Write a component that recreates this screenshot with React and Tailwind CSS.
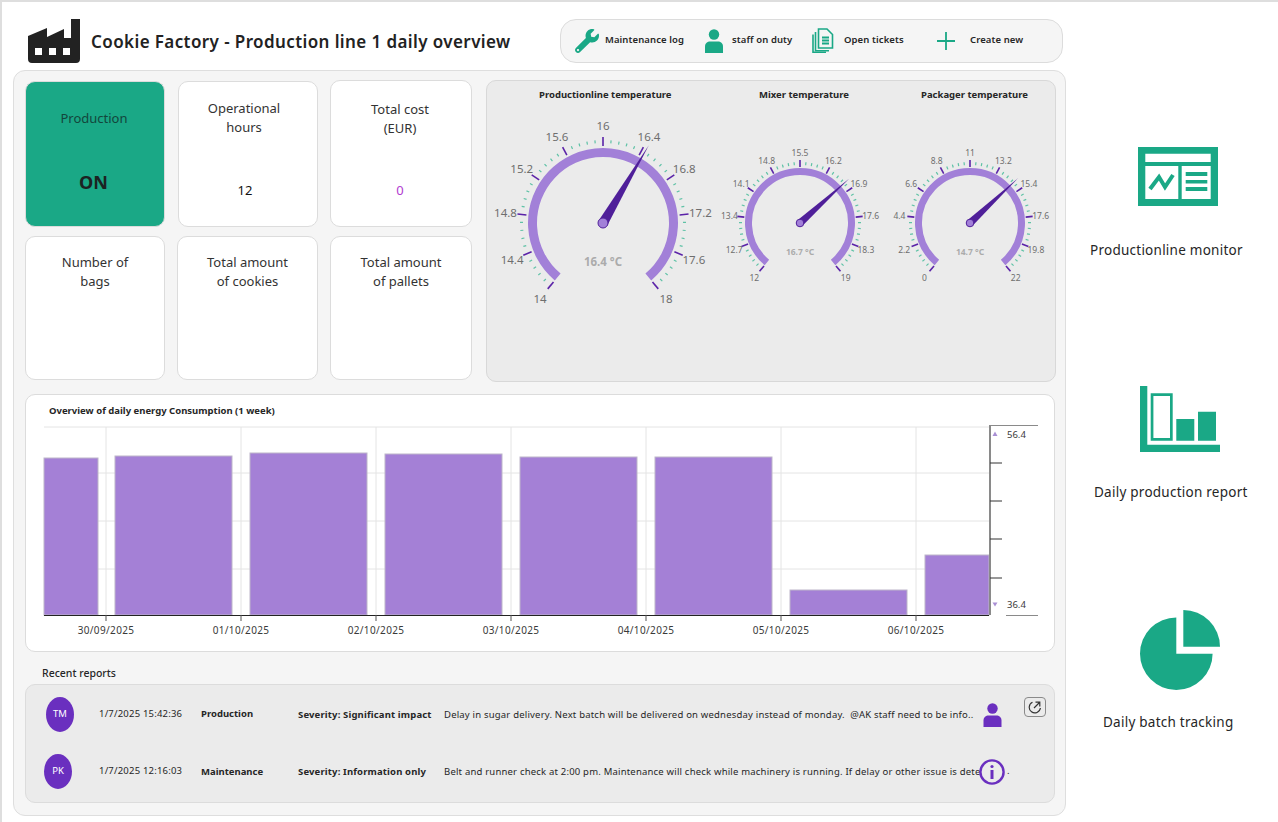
import React from "react";
import { FaWrench } from "react-icons/fa";

const teal = "#1aa886";

function polar(cx, cy, r, deg) {
  const a = (deg * Math.PI) / 180;
  return [cx + r * Math.sin(a), cy - r * Math.cos(a)];
}

function arcPath(cx, cy, r, from, to) {
  const [x1, y1] = polar(cx, cy, r, from);
  const [x2, y2] = polar(cx, cy, r, to);
  return `M${x1} ${y1} A${r} ${r} 0 1 1 ${x2} ${y2}`;
}

function Gauge({ title, titleClass, box, cx, ringR, ringW, labels, needle, tipR, value, fs, valueY, labelR, tickIn, tickOut, minorIn, minorOut, baseW }) {
  const cy = 223;
  const step = 280 / 10;
  const [tx, ty] = polar(cx, cy, tipR, needle);
  const [px, py] = polar(cx, cy, baseW, needle + 90);
  const [qx, qy] = polar(cx, cy, baseW, needle - 90);
  return (
    <div className="flex flex-col">
      <div className={`text-[9.5px] font-bold text-[#262626] leading-[14px] h-[25px] whitespace-nowrap ${titleClass}`}>{title}</div>
      <svg width={box[2]} height={box[3]} viewBox={box.join(" ")}>
        {labels.map((l, i) => {
          const deg = -140 + i * step;
          const [x1, y1] = polar(cx, cy, tickIn, deg);
          const [x2, y2] = polar(cx, cy, tickOut, deg);
          const [lx, ly] = polar(cx, cy, labelR, deg);
          const minors = i < 10 ? [1, 2, 3, 4] : [];
          return (
            <g key={l}>
              <line x1={x1} y1={y1} x2={x2} y2={y2} stroke="#5b23a8" strokeWidth="1.6" />
              {minors.map((m) => {
                const d = deg + (m * step) / 5;
                const [a, b] = polar(cx, cy, minorIn, d);
                const [c, e] = polar(cx, cy, minorOut, d);
                return <line key={m} x1={a} y1={b} x2={c} y2={e} stroke="#5fc2a6" strokeWidth="1.2" />;
              })}
              <text x={lx} y={ly + fs * 0.36 + 0.5} textAnchor="middle" fontSize={fs} fill="#6e6e6e">{l}</text>
            </g>
          );
        })}
        <path d={arcPath(cx, cy, ringR, -140, 140)} fill="none" stroke="#a280d8" strokeWidth={ringW} />
        <polygon points={`${tx},${ty} ${px},${py} ${qx},${qy}`} fill="#4f1f99" />
        <circle cx={cx} cy={cy} r={baseW} fill="#a280d8" stroke="#4f1f99" strokeWidth="1" />
        <text x={cx} y={valueY} textAnchor="middle" fontSize={fs} fontWeight="700" fill="#ababab">{value}</text>
      </svg>
    </div>
  );
}

function EnergyChart() {
  const bars = [
    [44, 98, 458], [115, 232, 456], [250, 367, 453], [385, 502, 454],
    [520, 637, 457], [655, 772, 457], [790, 907, 590], [925, 989, 555],
  ];
  const ticks = [
    [106, "30/09/2025"], [241, "01/10/2025"], [376, "02/10/2025"], [511, "03/10/2025"],
    [646, "04/10/2025"], [781, "05/10/2025"], [916, "06/10/2025"],
  ];
  return (
    <svg width="1028" height="230" viewBox="26 421 1028 230">
      {[427, 473, 521, 569].map((y) => (
        <line key={y} x1="44" x2="989" y1={y} y2={y} stroke="#e4e4e4" />
      ))}
      {ticks.map(([x]) => (
        <line key={x} x1={x} x2={x} y1="427" y2="615" stroke="#e4e4e4" />
      ))}
      {bars.map(([a, b, top]) => (
        <rect key={a} x={a} y={top} width={b - a} height={615 - top} fill="#a480d6" stroke="#bdb6c9" strokeWidth="1" />
      ))}
      <line x1="44" x2="989" y1="615.5" y2="615.5" stroke="#222" />
      {ticks.map(([x, t]) => (
        <g key={t}>
          <line x1={x} x2={x} y1="615" y2="621" stroke="#555" />
          <text x={x} y="634" textAnchor="middle" fontSize="10" letterSpacing="0.35" fill="#3a3a3a">{t}</text>
        </g>
      ))}
      <line x1="990" x2="990" y1="425" y2="615" stroke="#8a8a8a" strokeWidth="2" />
      <line x1="990" x2="1038" y1="425.5" y2="425.5" stroke="#8a8a8a" />
      <line x1="1006" x2="1038" y1="615.5" y2="615.5" stroke="#8a8a8a" />
      {[463, 501, 539, 578].map((y) => (
        <line key={y} x1="990" x2="1002" y1={y} y2={y} stroke="#333" />
      ))}
      <polygon points="995,431.5 992.5,436 997.5,436" fill="#a98fd4" />
      <polygon points="995,606.5 992.5,602.5 997.5,602.5" fill="#a98fd4" />
      <text x="1007" y="438" fontSize="9.5" fill="#3a3a3a">56.4</text>
      <text x="1007" y="608" fontSize="9.5" fill="#3a3a3a">36.4</text>
    </svg>
  );
}

function Tile({ className, lines, value, valueClass }) {
  return (
    <div className={`relative rounded-[10px] border border-[#dcdcdc] bg-white text-center text-[13px] leading-[19px] text-[#333] ${className}`}>
      {lines.map((l) => <div key={l}>{l}</div>)}
      {value && <div className={`absolute left-0 right-0 ${valueClass}`}>{value}</div>}
    </div>
  );
}

function PersonIcon({ color, className }) {
  return (
    <svg viewBox="0 0 18 24" className={className} fill={color}>
      <circle cx="9" cy="5.5" r="5.2" />
      <path d="M0 24V17.5C0 14 2.5 12.5 5 12.5H13C15.5 12.5 18 14 18 17.5V24Z" />
    </svg>
  );
}

export default function App() {
  return (
    <div className="flex w-[1278px] h-[822px] overflow-hidden border-t-2 border-l-2 border-[#dedede] bg-white font-['Noto_Sans',sans-serif] text-[#262626]">
      <div className="w-[1064px] pl-[11px] shrink-0">
        {/* header */}
        <div className="flex items-center h-[68px]">
          <svg viewBox="0 0 52 44" className="w-[52px] h-[44px] ml-[15px] mt-[10px] shrink-0" fill="#222">
            <path d="M0 17L19 9V18L36 10V19H43V0H52V40A4 4 0 0 1 48 44H4A4 4 0 0 1 0 40Z" />
            <rect x="7" y="29" width="7" height="7" fill="#fff" />
            <rect x="21" y="29" width="7" height="7" fill="#fff" />
            <rect x="35" y="29" width="7" height="7" fill="#fff" />
          </svg>
          <h1 className="ml-[11px] mt-[12px] text-[17px] tracking-[0.4px] font-semibold whitespace-nowrap text-[#222]">Cookie Factory - Production line 1 daily overview</h1>
          <div className="ml-auto mr-[3px] mt-[9px] flex items-center w-[503px] h-[44px] rounded-[16px] border border-[#dcdcdc] bg-[#f5f5f5] text-[9.5px] tracking-[0.1px] font-semibold whitespace-nowrap">
            <FaWrench className="ml-[14px] w-[24px] h-[24px] shrink-0" color={teal} />
            <span className="w-[106px] pl-[6px]">Maintenance log</span>
            <PersonIcon color={teal} className="w-[18px] h-[24px] shrink-0" />
            <span className="w-[89px] pl-[9px]">staff on duty</span>
            <svg viewBox="0 0 22 25" className="w-[22px] h-[25px] shrink-0" fill="none" stroke={teal} strokeWidth="1.6">
              <path d="M6.5 1H15L20.5 6.5V20H6.5Z" />
              <path d="M3.5 4V22.8H17" />
              <path d="M1 6.5V24.2H14" />
              <path d="M10 9.5H17M10 12.5H17M10 15.5H17" strokeWidth="1.8" />
            </svg>
            <span className="w-[103px] pl-[10px]">Open tickets</span>
            <svg viewBox="0 0 18 18" className="w-[18px] h-[18px] shrink-0" stroke={teal} strokeWidth="1.8">
              <path d="M9 0V18M0 9H18" />
            </svg>
            <span className="ml-[15px]">Create new</span>
          </div>
        </div>

        {/* main panel */}
        <div className="w-[1053px] h-[746px] rounded-[12px] border border-[#dedede] bg-[#f5f5f5] pl-[11px] pt-[9px]">
          <div className="flex">
            <div className="flex flex-col w-[447px]">
              <div className="flex items-start">
                <Tile className="w-[140px] h-[146px] mt-[1px] !bg-[#1aa886] border-[#1aa886] pt-[27px] pr-[2px] !text-[#13463c]" lines={["Production"]} value="ON" valueClass="top-[86px] pr-[3px] text-[18px] leading-[28px] font-bold text-[#1c2322]" />
                <Tile className="w-[140px] h-[146px] ml-[13px] mt-[1px] pt-[17px] pr-[8px]" lines={["Operational", "hours"]} value="12" valueClass="top-[99px] pr-[6px] text-[#111]" />
                <Tile className="w-[142px] h-[147px] ml-[12px] pt-[19px] pr-[2px]" lines={["Total cost", "(EUR)"]} value="0" valueClass="top-[100px] pr-[2px] text-[#b13cd0]" />
              </div>
              <div className="flex mt-[9px]">
                <Tile className="w-[140px] h-[144px] pt-[16px]" lines={["Number of", "bags"]} />
                <Tile className="w-[141px] h-[144px] ml-[12px] pt-[16px]" lines={["Total amount", "of cookies"]} />
                <Tile className="w-[142px] h-[144px] ml-[12px] pt-[16px]" lines={["Total amount", "of pallets"]} />
              </div>
            </div>
            <div className="flex w-[570px] h-[302px] ml-[14px] rounded-[10px] border border-[#d8d8d8] bg-[#ebebeb] pt-[7px] overflow-hidden">
              <Gauge
                title="Productionline temperature" titleClass="pl-[52px]" box={[487, 113, 234, 200]} cx={603} ringR={70.5} ringW={9}
                labels={["14", "14.4", "14.8", "15.2", "15.6", "16", "16.4", "16.8", "17.2", "17.6", "18"]}
                needle={30.5} tipR={90} value="16.4 °C" fs={11.5} valueY={266} labelR={98} tickIn={77} tickOut={86} minorIn={80} minorOut={83} baseW={5}
              />
              <Gauge
                title="Mixer temperature" titleClass="pl-[38px]" box={[721, 113, 166, 200]} cx={800} ringR={51.5} ringW={7}
                labels={["12", "12.7", "13.4", "14.1", "14.8", "15.5", "16.2", "16.9", "17.6", "18.3", "19"]}
                needle={48} tipR={66} value="16.7 °C" fs={8.5} valueY={255} labelR={71} tickIn={56} tickOut={63} minorIn={58} minorOut={61} baseW={3.8}
              />
              <Gauge
                title="Packager temperature" titleClass="pl-[34px]" box={[887, 113, 168, 200]} cx={970} ringR={51.5} ringW={7}
                labels={["0", "2.2", "4.4", "6.6", "8.8", "11", "13.2", "15.4", "17.6", "19.8", "22"]}
                needle={47} tipR={66} value="14.7 °C" fs={8.5} valueY={255} labelR={71} tickIn={56} tickOut={63} minorIn={58} minorOut={61} baseW={3.8}
              />
            </div>
          </div>

          {/* chart card */}
          <div className="w-[1030px] h-[258px] mt-[12px] rounded-[10px] border border-[#dcdcdc] bg-white">
            <div className="h-[26px] pl-[23px] pt-[9px] text-[9.5px] font-bold leading-[14px]">Overview of daily energy Consumption (1 week)</div>
            <EnergyChart />
          </div>

          {/* reports */}
          <div className="mt-[14px] ml-[17px] text-[10.5px] font-medium leading-[14px]">Recent reports</div>
          <div className="relative w-[1030px] h-[119px] mt-[4px] rounded-[10px] border border-[#dcdcdc] bg-[#ebebeb] pt-[1px] text-[9.5px] whitespace-nowrap">
            <div className="flex items-center h-[57px]">
              <div className="flex items-center justify-center w-[28px] h-[35px] ml-[20px] rounded-[50%] bg-[#6a2fbf] text-white">TM</div>
              <div className="ml-[25px] w-[102px] tracking-[0.2px]">1/7/2025 15:42:36</div>
              <div className="w-[97px] font-bold">Production</div>
              <div className="w-[146px] font-bold tracking-[0.15px] pt-[1px]">Severity: Significant impact</div>
              <div className="w-[534px] tracking-[0.2px] pt-[2px]">Delay in sugar delivery. Next batch will be delivered on wednesday instead of monday.&nbsp; @AK staff need to be info..</div>
              <PersonIcon color="#6a2fbf" className="ml-[5px] w-[19px] h-[24px] shrink-0" />
            </div>
            <div className="flex items-center h-[57px]">
              <div className="flex items-center justify-center w-[28px] h-[35px] ml-[18px] rounded-[50%] bg-[#6a2fbf] text-white">PK</div>
              <div className="ml-[27px] w-[102px] tracking-[0.2px]">1/7/2025 12:16:03</div>
              <div className="w-[97px] font-bold pt-[1px]">Maintenance</div>
              <div className="w-[146px] font-bold tracking-[0.15px] pt-[1px]">Severity: Information only</div>
              <div className="w-[535px] tracking-[0.2px] pt-[2px]">Belt and runner check at 2:00 pm. Maintenance will check while machinery is running. If delay or other issue is dete</div>
              <svg viewBox="0 0 26 26" className="w-[26px] h-[26px] shrink-0" fill="none" stroke="#6a2fbf" strokeWidth="2.4">
                <circle cx="13" cy="13" r="11.6" />
                <circle cx="13" cy="7.5" r="1.6" fill="#6a2fbf" stroke="none" />
                <path d="M13 11V20" strokeWidth="3" />
              </svg>
              <span className="ml-[2px]">.</span>
            </div>
            <button className="absolute left-[998px] top-[12px] flex items-center justify-center w-[22px] h-[20px] rounded-[4px] border border-[#8a8a8a]">
              <svg viewBox="0 0 14 14" className="w-[14px] h-[14px]" fill="none" stroke="#333" strokeWidth="1.2">
                <path d="M4.5 2.2A5.6 5.6 0 1 0 12.4 8" />
                <path d="M6 8L11.5 2.5M7.5 2.2H11.8V6.5" />
              </svg>
            </button>
          </div>
        </div>
      </div>

      {/* right side links */}
      <div className="flex flex-col pt-[145px] text-[13.5px] tracking-[0.25px] leading-[18px] whitespace-nowrap">
        <svg viewBox="0 0 80 59" className="w-[80px] h-[59px] ml-[72px] shrink-0" fill={teal}>
          <path fillRule="evenodd" d="M0 0H80V59H0ZM7.3 6.7V15H72.7V6.7ZM7.3 19V52H40.3V19ZM43.7 19V52H72.7V19Z" />
          <path d="M12 42L21 30L27 40L35 28" fill="none" stroke={teal} strokeWidth="4" />
          <path d="M47.7 25H69.3V29H47.7ZM47.7 33H69.3V36.5H47.7ZM47.7 40H69.3V44H47.7Z" />
        </svg>
        <div className="ml-[24px] mt-[35px]">Productionline monitor</div>
        <svg viewBox="0 0 80 66" className="w-[80px] h-[66px] ml-[74px] mt-[127px] shrink-0" fill={teal}>
          <path d="M0 0H7.3V58.7H80V66H0Z" />
          <path fillRule="evenodd" d="M10.7 7.3H32.7V54.7H10.7ZM13.4 10V52H30V10Z" />
          <path d="M36.3 33H54.3V54.7H36.3ZM58 25.7H76V54.7H58Z" />
        </svg>
        <div className="ml-[28px] mt-[31px]">Daily production report</div>
        <svg viewBox="0 0 80 80" className="w-[80px] h-[80px] ml-[74px] mt-[109px] shrink-0" fill={teal}>
          <path d="M43.3 0A36.7 36.7 0 0 1 80 36.7H43.3Z" />
          <path d="M36.3 7.4A36.3 36.3 0 1 0 72.6 43.7H36.3Z" />
        </svg>
        <div className="ml-[37px] mt-[23px]">Daily batch tracking</div>
      </div>
    </div>
  );
}
